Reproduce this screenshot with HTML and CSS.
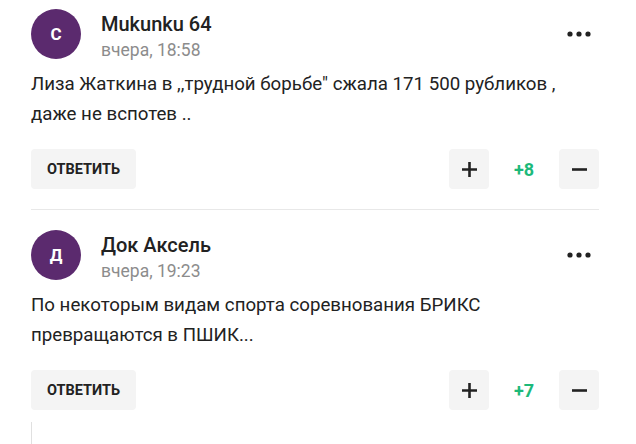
FILE: index.html
```html
<!DOCTYPE html>
<html lang="ru">
<head>
<meta charset="utf-8">
<title>Комментарии</title>
<link rel="stylesheet" href="styles.css">
</head>
<body>
<div class="comments">
  <div class="comment">
    <div class="head">
      <div class="avatar">С</div>
      <div class="meta">
        <div class="name">Mukunku 64</div>
        <div class="date">вчера, 18:58</div>
      </div>
      <button class="more" aria-label="Ещё">
        <svg width="24" height="6" viewBox="0 0 24 6"><circle cx="3" cy="3" r="2.6" fill="#222"/><circle cx="12" cy="3" r="2.6" fill="#222"/><circle cx="21" cy="3" r="2.6" fill="#222"/></svg>
      </button>
    </div>
    <p class="text">Лиза Жаткина в ,,трудной борьбе" сжала 171 500 рубликов , даже не вспотев ..</p>
    <div class="actions">
      <button class="reply">ОТВЕТИТЬ</button>
      <div class="vote">
        <button class="vbtn" aria-label="Плюс"><svg width="15" height="15" viewBox="0 0 15 15"><path d="M7.5 0v15M0 7.5h15" stroke="#222" stroke-width="2.6"/></svg></button>
        <span class="score">+8</span>
        <button class="vbtn" aria-label="Минус"><svg width="15" height="15" viewBox="0 0 15 15"><path d="M0 7.5h15" stroke="#222" stroke-width="2.6"/></svg></button>
      </div>
    </div>
  </div>
  <div class="comment">
    <div class="head">
      <div class="avatar">Д</div>
      <div class="meta">
        <div class="name">Док Аксель</div>
        <div class="date">вчера, 19:23</div>
      </div>
      <button class="more" aria-label="Ещё">
        <svg width="24" height="6" viewBox="0 0 24 6"><circle cx="3" cy="3" r="2.6" fill="#222"/><circle cx="12" cy="3" r="2.6" fill="#222"/><circle cx="21" cy="3" r="2.6" fill="#222"/></svg>
      </button>
    </div>
    <p class="text">По некоторым видам спорта соревнования БРИКС превращаются в ПШИК...</p>
    <div class="actions">
      <button class="reply">ОТВЕТИТЬ</button>
      <div class="vote">
        <button class="vbtn" aria-label="Плюс"><svg width="15" height="15" viewBox="0 0 15 15"><path d="M7.5 0v15M0 7.5h15" stroke="#222" stroke-width="2.6"/></svg></button>
        <span class="score">+7</span>
        <button class="vbtn" aria-label="Минус"><svg width="15" height="15" viewBox="0 0 15 15"><path d="M0 7.5h15" stroke="#222" stroke-width="2.6"/></svg></button>
      </div>
    </div>
    <div class="replies"></div>
  </div>
</div>
</body>
</html>
```
FILE: styles.css
```css
* { box-sizing: border-box; }
html, body { margin: 0; padding: 0; background: #fff; }
body {
  font-family: Roboto, "Liberation Sans", sans-serif;
  color: #222;
  overflow: hidden;
}
.comments {
  width: 636px;
  padding: 9px 37px 0 31px;
}
.comment {
  padding-bottom: 20px;
  border-bottom: 1px solid #e8e8e8;
}
.comment + .comment {
  padding-top: 20px;
  border-bottom: none;
}
.head {
  display: flex;
  align-items: center;
  height: 50px;
}
.avatar {
  width: 50px;
  height: 50px;
  border-radius: 50%;
  background: #5b2a6e;
  color: #fff;
  font-size: 17px;
  font-weight: 700;
  display: flex;
  align-items: center;
  justify-content: center;
  flex-shrink: 0;
}
.meta {
  align-self: flex-start;
  padding-top: 1px;
  margin-left: 20px;
  flex: 1;
}
.name {
  font-size: 20px;
  font-weight: 500;
  line-height: 28px;
  color: #222;
}
.date {
  font-size: 17.5px;
  line-height: 24px;
  color: #8c8c8c;
}
.more {
  width: 40px;
  height: 40px;
  border: none;
  background: none;
  padding: 0;
  display: flex;
  align-items: center;
  justify-content: center;
}
.text {
  margin: 10px 0 0;
  font-size: 18.7px;
  line-height: 30px;
  color: #222;
}
.actions {
  margin-top: 20px;
  display: flex;
  align-items: center;
  justify-content: space-between;
}
.reply {
  height: 40px;
  width: 105px;
  border: none;
  border-radius: 4px;
  background: #f4f4f4;
  font-family: Roboto, "Liberation Sans", sans-serif;
  font-size: 14.5px;
  font-weight: 700;
  color: #222;
  padding: 0;
}
.vote {
  display: flex;
  align-items: center;
}
.vbtn {
  width: 40px;
  height: 40px;
  border: none;
  border-radius: 4px;
  background: #f4f4f4;
  padding: 0;
  display: flex;
  align-items: center;
  justify-content: center;
}
.score {
  width: 70px;
  text-align: center;
  font-size: 18px;
  font-weight: 700;
  color: #1db97a;
}
.replies {
  margin-top: 12px;
  height: 40px;
  border-left: 1px solid #e0e0e0;
}
```
